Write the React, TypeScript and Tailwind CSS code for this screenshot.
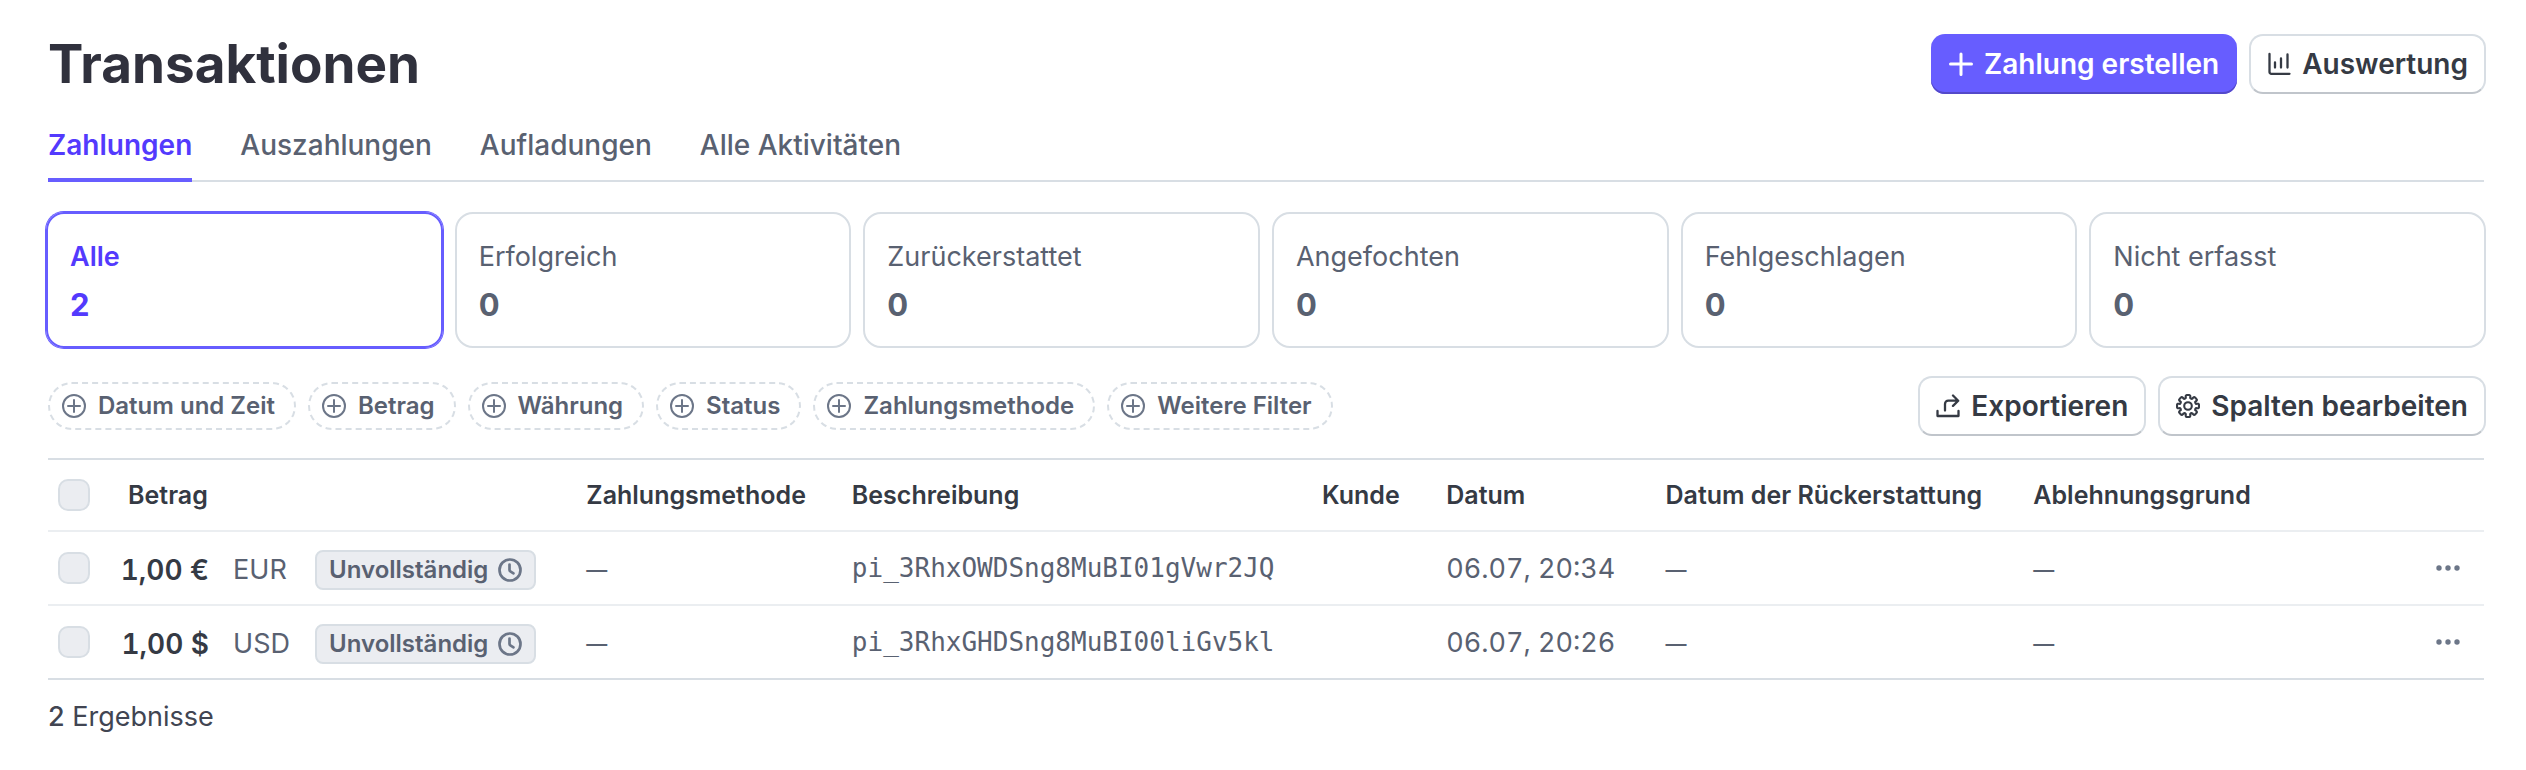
import React from "react";

const font = "font-[Inter,'Liberation_Sans',sans-serif]";

type IconProps = { className?: string };

const PlusIcon = ({ className }: IconProps) => (
  <svg viewBox="0 0 24 24" fill="none" stroke="currentColor" strokeWidth="3" strokeLinecap="round" className={className} aria-hidden="true">
    <path d="M12 2v20.500M1.500 12h21" />
  </svg>
);

const ChartIcon = ({ className }: IconProps) => (
  <svg viewBox="0 0 24 24" fill="none" stroke="currentColor" strokeWidth="2.3" strokeLinecap="round" className={className} aria-hidden="true">
    <path d="M2.500 2v18a1.800 1.800 0 0 0 1.800 1.800H22.500M8 10.500v5M14 6.500v9M20.500 2.500v13" />
  </svg>
);

const CirclePlusIcon = ({ className }: IconProps) => (
  <svg viewBox="0 0 24 24" fill="none" stroke="currentColor" strokeWidth="2" strokeLinecap="round" className={className} aria-hidden="true">
    <circle cx="12" cy="12" r="11" />
    <path d="M12 6v12M6 12h12" />
  </svg>
);

const ExportIcon = ({ className }: IconProps) => (
  <svg viewBox="0 0 24 24" fill="none" stroke="currentColor" strokeWidth="2.3" strokeLinecap="round" strokeLinejoin="round" className={className} aria-hidden="true">
    <path d="M1.500 17v5h21v-5M9 16.500v-6.500a3.300 3.300 0 0 1 3.300-3.300H22M17 1.500l5.200 5.200-5.200 5.200" />
  </svg>
);

const gearOutline = Array.from({ length: 8 }, (_, i) => {
  const point = (radius: number, degrees: number) => {
    const angle = ((i * 45 + degrees - 90) * Math.PI) / 180;
    return `${(12 + radius * Math.cos(angle)).toFixed(2)} ${(12 + radius * Math.sin(angle)).toFixed(2)}`;
  };
  return `${point(8.3, -15)} Q ${point(11.4, -14)} ${point(11, -5)} L ${point(11, 5)} Q ${point(11.4, 14)} ${point(8.3, 15)} Q ${point(7.6, 22.5)}`;
}).join(" ");

const GearIcon = ({ className }: IconProps) => (
  <svg viewBox="0 0 24 24" fill="none" stroke="currentColor" strokeWidth="2.1" strokeLinejoin="round" className={className} aria-hidden="true">
    <circle cx="12" cy="12" r="3.800" />
    <path d={`M ${gearOutline} ${gearOutline.split(" ").slice(0, 2).join(" ")} Z`} />
  </svg>
);

const ClockIcon = ({ className }: IconProps) => (
  <svg viewBox="0 0 24 24" fill="none" stroke="currentColor" strokeWidth="2.7" strokeLinecap="round" strokeLinejoin="round" className={className} aria-hidden="true">
    <circle cx="12" cy="12" r="10.500" />
    <path d="M11.500 6.500v5.500a1.500 1.500 0 0 0 .8 1.300l3.200 2" />
  </svg>
);

const DotsIcon = ({ className }: IconProps) => (
  <svg viewBox="0 0 24 6" fill="currentColor" className={className} aria-hidden="true">
    <circle cx="3" cy="3" r="2.700" />
    <circle cx="12" cy="3" r="2.700" />
    <circle cx="21" cy="3" r="2.700" />
  </svg>
);

const tabs = ["Zahlungen", "Auszahlungen", "Aufladungen", "Alle Aktivitäten"];

const stats = [
  { label: "Alle", count: 2 },
  { label: "Erfolgreich", count: 0 },
  { label: "Zurückerstattet", count: 0 },
  { label: "Angefochten", count: 0 },
  { label: "Fehlgeschlagen", count: 0 },
  { label: "Nicht erfasst", count: 0 },
];

const filters = ["Datum und Zeit", "Betrag", "Währung", "Status", "Zahlungsmethode", "Weitere Filter"];

const rows = [
  { amount: "1,00 €", currency: "EUR", id: "pi_3RhxOWDSng8MuBI01gVwr2JQ", date: "06.07, 20:34" },
  { amount: "1,00 $", currency: "USD", id: "pi_3RhxGHDSng8MuBI00liGv5kl", date: "06.07, 20:26" },
];

function SecondaryButton({ icon, children }: { icon: React.ReactNode; children: React.ReactNode }) {
  return (
    <button
      type="button"
      className="flex h-15 items-center gap-[11px] rounded-[14px] border-2 border-[#d8dee4] border-b-[#c0c5cb] bg-white px-4 text-[28px] font-semibold text-[#353a44]"
    >
      {icon}
      {children}
    </button>
  );
}

function Checkbox({ label }: { label: string }) {
  return (
    <input
      type="checkbox"
      aria-label={label}
      className="block size-8 appearance-none rounded-[10px] border-2 border-[#d8dee4] bg-[#ebedf1]"
    />
  );
}

export default function App() {
  return (
    <main className={`${font} bg-white pt-[34px] pr-[42px] pb-9 pl-12 text-[#596171]`}>
      <header className="-mr-0.5 flex h-15 items-center justify-between">
        <h1 className="pt-0.5 text-[53px] font-bold text-[#30313d]">Transaktionen</h1>
        <div className="flex gap-3">
          <button
            type="button"
            className="flex h-15 items-center gap-[11px] rounded-[14px] bg-[#675dff] px-[18px] text-[28px] font-semibold text-white shadow-[inset_0_-2px_0_#5449c9]"
          >
            <PlusIcon className="size-6" />
            Zahlung erstellen
          </button>
          <SecondaryButton icon={<ChartIcon className="size-6" />}>Auswertung</SecondaryButton>
        </div>
      </header>

      <nav className="mt-6 flex h-16 gap-12 border-b-2 border-[#d8dee4]">
        {tabs.map((tab, i) => (
          <a
            key={tab}
            href="#"
            className={
              i === 0
                ? "-mb-0.5 border-b-4 border-[#675dff] pt-1.5 text-[28px] font-semibold text-[#533afd]"
                : "pt-1.5 text-[28px] font-medium"
            }
          >
            {tab}
          </a>
        ))}
      </nav>

      <section className="-mx-0.5 mt-[30px] grid grid-cols-6 gap-3">
        {stats.map(({ label, count }, i) => (
          <button
            key={label}
            type="button"
            className={
              i === 0
                ? "flex h-34 flex-col rounded-[18px] border-2 border-[#675dff] px-[22px] pt-[23px] text-left text-[#533afd] ring-1 ring-[#675dff]"
                : "flex h-34 flex-col rounded-[18px] border-2 border-[#d8dee4] px-[22px] pt-[23px] text-left"
            }
          >
            <span className={i === 0 ? "text-[27px] leading-10 font-semibold" : "text-[27px] leading-10"}>{label}</span>
            <span className="mt-2 text-[31px] leading-10 font-bold">{count}</span>
          </button>
        ))}
      </section>

      <section className="-mr-0.5 mt-7 flex items-center justify-between">
        <div className="flex gap-3">
          {filters.map((filter) => (
            <button
              key={filter}
              type="button"
              className="flex h-12 items-center gap-3 rounded-full border-2 border-dashed border-[#d8dee4] px-3 pr-[19px] text-[24px] font-semibold"
            >
              <CirclePlusIcon className="size-6 text-[#6c7688]" />
              {filter}
            </button>
          ))}
        </div>
        <div className="flex gap-3">
          <SecondaryButton icon={<ExportIcon className="size-6" />}>Exportieren</SecondaryButton>
          <SecondaryButton icon={<GearIcon className="size-6" />}>Spalten bearbeiten</SecondaryButton>
        </div>
      </section>

      <table className="mt-[22px] w-full table-fixed border-collapse border-y-2 border-[#d8dee4] text-left text-[27px]">
        <colgroup>
          <col className="w-[3%]" />
          <col className="w-[19.1%]" />
          <col className="w-[10.9%]" />
          <col className="w-[19.3%]" />
          <col className="w-[5.1%]" />
          <col className="w-[9%]" />
          <col className="w-[15.1%]" />
          <col />
          <col className="w-[5%]" />
        </colgroup>
        <thead>
          <tr className="h-18 border-b-2 border-[#ebeef1] text-[25px] text-[#353a44]">
            <th className="pl-2.5"><Checkbox label="Alle auswählen" /></th>
            <th className="pt-0.5 pl-[7px] font-semibold">Betrag</th>
            <th className="pt-0.5 font-semibold">Zahlungsmethode</th>
            <th className="pt-0.5 font-semibold">Beschreibung</th>
            <th className="pt-0.5 font-semibold">Kunde</th>
            <th className="pt-0.5 font-semibold">Datum</th>
            <th className="pt-0.5 font-semibold">Datum der Rückerstattung</th>
            <th className="pt-0.5 font-semibold">Ablehnungsgrund</th>
            <td />
          </tr>
        </thead>
        <tbody>
          {rows.map((row) => (
            <tr key={row.id} className="h-[74px] border-b-2 border-[#ebeef1] last:border-[#d8dee4]">
              <td className="pl-2.5"><Checkbox label={`${row.amount} auswählen`} /></td>
              <td className="pt-1">
                <div className="flex items-center">
                  <span className="flex w-22 justify-end text-[28px] font-semibold whitespace-nowrap text-[#353a44] tabular-nums">{row.amount}</span>
                  <span className="ml-6 w-[82px]">{row.currency}</span>
                  <span className="flex h-10 items-center gap-[10px] rounded-lg border-2 border-[#d8dee4] bg-[#ebedf1] px-3 text-[24px] font-semibold">
                    Unvollständig
                    <ClockIcon className="size-6 text-[#6c7688]" />
                  </span>
                </div>
              </td>
              <td className="pt-1 text-[21px] font-medium">—</td>
              <td className="font-['DejaVu_Sans_Mono',monospace] text-[26px]">{row.id}</td>
              <td />
              <td className="pt-0.5 tabular-nums">{row.date}</td>
              <td className="pt-1 text-[21px] font-medium">—</td>
              <td className="pt-1 text-[21px] font-medium">—</td>
              <td>
                <button type="button" aria-label="Weitere Aktionen" className="mr-6 ml-auto block">
                  <DotsIcon className="w-6 text-[#6c7688]" />
                </button>
              </td>
            </tr>
          ))}
        </tbody>
      </table>

      <p className="mt-[17px] text-[27px] text-[#414552]">
        <span className="font-medium">2</span> Ergebnisse
      </p>
    </main>
  );
}
